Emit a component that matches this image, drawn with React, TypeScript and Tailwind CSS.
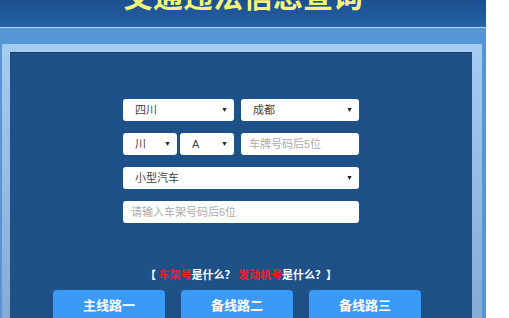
const font = "font-['Liberation_Sans','Noto_Sans_CJK_SC',sans-serif]"

function Select({ label, className }: { label: string; className: string }) {
  return (
    <div className={`h-[22px] bg-white rounded-[3px] flex items-center justify-between pl-[12px] pr-[6px] text-[11px] text-[#444] ${className}`}>
      <span>{label}</span>
      <span className="text-[7px] text-[#222]">▼</span>
    </div>
  )
}

function Input({ placeholder, className }: { placeholder: string; className: string }) {
  return (
    <div className={`h-[22px] bg-white rounded-[3px] flex items-center pl-[8px] text-[11px] text-[#aaa] ${className}`}>
      {placeholder}
    </div>
  )
}

export default function App() {
  return (
    <div className={`w-[509px] h-[318px] bg-white overflow-hidden ${font}`}>
      <div className="w-[486px]">
        {/* Header */}
        <div className="h-[27px] bg-gradient-to-b from-[#1b4f8f] to-[#2462a6] flex justify-center overflow-hidden">
          <h1 className="text-[30px] leading-none font-bold text-[#f6f57a] -mt-[18px]">交通违法信息查询</h1>
        </div>
        <div className="h-px bg-[#b9d4ee]" />

        {/* Frame */}
        <div className="bg-[#5597d6] pt-[16px] pl-[2px] pr-[4px]">
          <div className="bg-gradient-to-b from-[#a6ccf2] to-[#86acd6] pt-[8px] pl-[8px] pr-[10px]">
            <div className="bg-[#1d5188] h-[266px] pt-[46px] border-t border-[#173f6c]">
              <div className="w-[236px] mx-auto flex flex-col gap-[12px]">
                <div className="flex gap-[7px]">
                  <Select label="四川" className="w-[111px]" />
                  <Select label="成都" className="w-[118px]" />
                </div>
                <div className="flex gap-[7px]">
                  <div className="flex gap-[3px]">
                    <Select label="川" className="w-[54px]" />
                    <Select label="A" className="w-[54px]" />
                  </div>
                  <Input placeholder="车牌号码后5位" className="w-[118px]" />
                </div>
                <Select label="小型汽车" className="w-[236px]" />
                <Input placeholder="请输入车架号码后6位" className="w-[236px]" />
              </div>

              <p className="mt-[44px] text-center text-[11px] font-bold text-white leading-[14px] font-['Noto_Sans_CJK_SC',sans-serif]">
                【 <span className="text-[#e8222c]">车架号</span>是什么？ <span className="text-[#e8222c]">发动机号</span>是什么？】
              </p>

              <div className="mt-[9px] pl-[43px] flex gap-[16px]">
                {['主线路一', '备线路二', '备线路三'].map(t => (
                  <button key={t} className="w-[112px] h-[32px] bg-[#3a9af5] rounded-[4px] text-white text-[13px] font-bold">
                    {t}
                  </button>
                ))}
              </div>
            </div>
          </div>
        </div>
      </div>
    </div>
  )
}
